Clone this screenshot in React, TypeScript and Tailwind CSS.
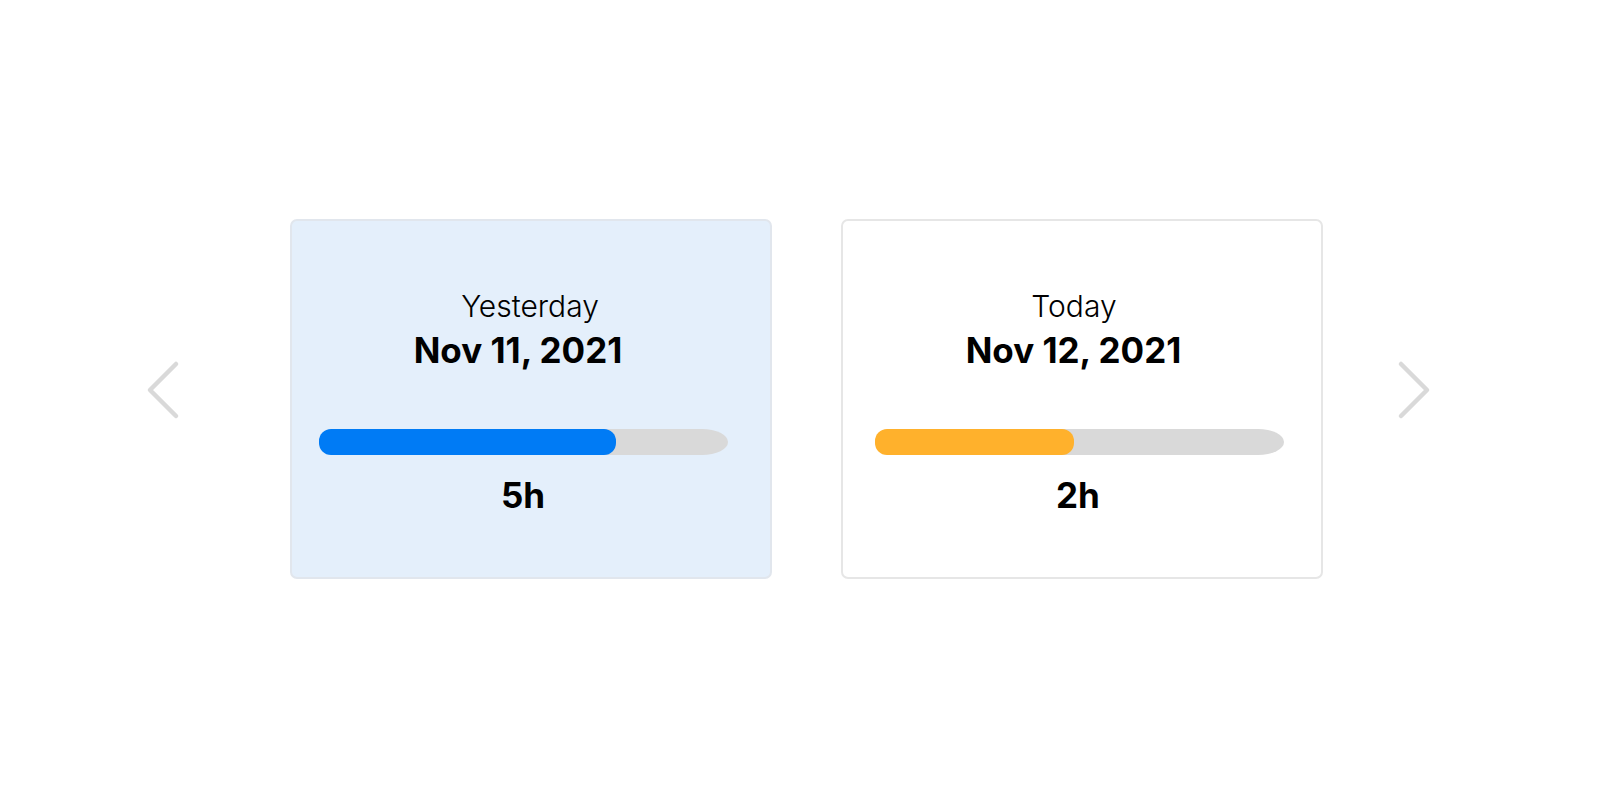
const days = [
  {
    label: 'Yesterday',
    date: 'Nov 11, 2021',
    hours: '5h',
    pct: 72.6,
    fill: 'bg-[#007bf5]',
    card: 'bg-[#e4effb] border-[#e1e6ed]',
    labelShift: 'mr-[2px]',
    dateShift: 'mr-[26px]',
    barShift: 'mr-[15px]',
    valueShift: 'mr-[16px]',
  },
  {
    label: 'Today',
    date: 'Nov 12, 2021',
    hours: '2h',
    pct: 48.8,
    fill: 'bg-[#ffb12c]',
    card: 'bg-white border-[#e6e6e6]',
    labelShift: 'mr-[16px]',
    dateShift: 'mr-[17px]',
    barShift: 'mr-[6px]',
    valueShift: 'mr-[8px]',
  },
];

function Chevron({ dir }: { dir: 'left' | 'right' }) {
  return (
    <svg width="34" height="60" viewBox="0 0 34 60" fill="none" className="shrink-0">
      <path
        d={dir === 'left' ? 'M30 4 L4 30 L30 56' : 'M4 4 L30 30 L4 56'}
        stroke="#d9d9d9"
        strokeWidth="4.5"
        strokeLinecap="round"
        strokeLinejoin="round"
      />
    </svg>
  );
}

function DayCard({ day }: { day: (typeof days)[number] }) {
  return (
    <div
      className={`w-[482px] h-[360px] shrink-0 rounded-[7px] border-2 flex flex-col items-center pt-[67px] ${day.card}`}
    >
      <div className={`text-[30px] leading-[36px] font-light text-black ${day.labelShift}`}>{day.label}</div>
      <div className={`mt-[5px] text-[35px] leading-[42px] font-bold text-black ${day.dateShift}`}>
        {day.date}
      </div>
      <div className={`mt-[58px] w-[409px] h-[26px] rounded-[26px/13px] bg-[#d9d9d9] ${day.barShift}`}>
        <div className={`h-full rounded-[12px] ${day.fill}`} style={{ width: `${day.pct}%` }} />
      </div>
      <div className={`mt-[19px] text-[35px] leading-[42px] font-bold text-black ${day.valueShift}`}>
        {day.hours}
      </div>
    </div>
  );
}

export default function App() {
  return (
    <div
      className="w-full h-[800px] bg-white flex items-start pt-[219px] pl-[146px]"
      style={{ fontFamily: 'Inter, "Noto Sans", sans-serif' }}
    >
      <div className="mt-[141px]">
        <Chevron dir="left" />
      </div>
      <div className="ml-[110px] flex gap-[69px]">
        {days.map((d) => (
          <DayCard key={d.label} day={d} />
        ))}
      </div>
      <div className="ml-[74px] mt-[141px]">
        <Chevron dir="right" />
      </div>
    </div>
  );
}
